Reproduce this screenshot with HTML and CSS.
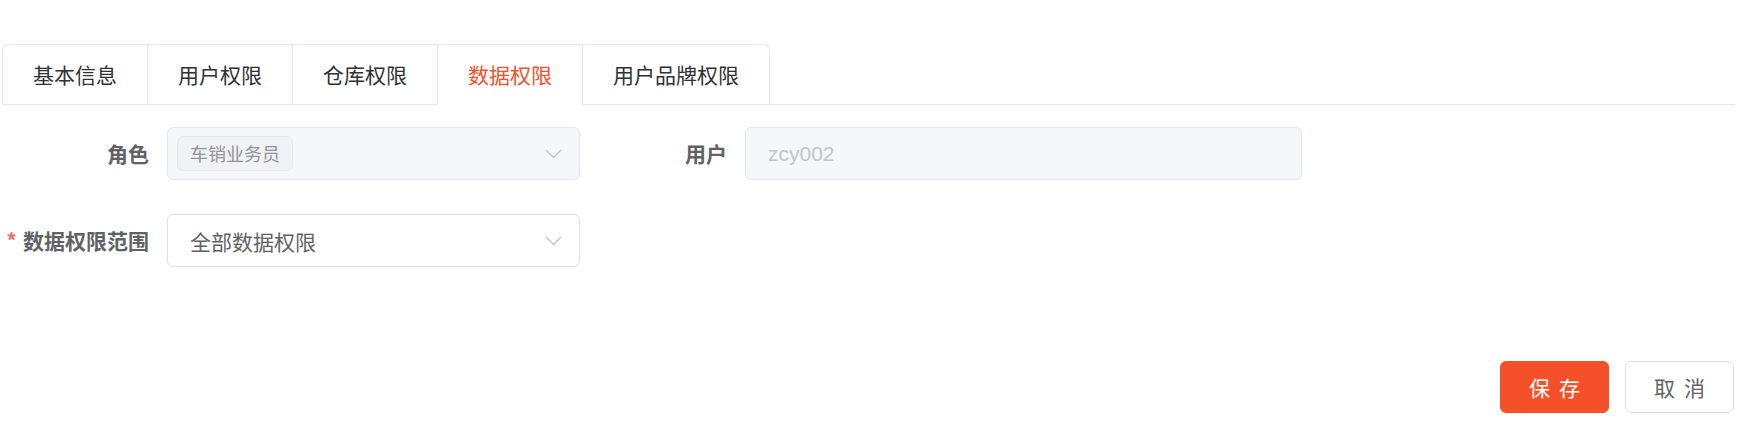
FILE: index.html
```html
<!DOCTYPE html>
<html lang="zh-CN">
<head>
<meta charset="utf-8">
<title>数据权限</title>
<link rel="stylesheet" href="styles.css">
</head>
<body>
<div class="page">
  <div class="tabs-header">
    <div class="tabs-nav">
      <div class="tab">基本信息</div>
      <div class="tab">用户权限</div>
      <div class="tab">仓库权限</div>
      <div class="tab active">数据权限</div>
      <div class="tab">用户品牌权限</div>
    </div>
  </div>

  <div class="form">
    <div class="form-row">
      <div class="form-item col-a">
        <label class="label">角色</label>
        <div class="control select disabled">
          <span class="tag">车销业务员</span>
          <svg class="arrow" width="17" height="10" viewBox="0 0 17 10"><polyline points="1,1 8.5,8.5 16,1" fill="none" stroke="#c0c4cc" stroke-width="1.4"/></svg>
        </div>
      </div>
      <div class="form-item col-b">
        <label class="label">用户</label>
        <div class="control input disabled">
          <span class="latin muted">zcy002</span>
        </div>
      </div>
    </div>
    <div class="form-row second">
      <div class="form-item col-a">
        <label class="label"><span class="req">*</span>数据权限范围</label>
        <div class="control select">
          <span class="value">全部数据权限</span>
          <svg class="arrow" width="17" height="10" viewBox="0 0 17 10"><polyline points="1,1 8.5,8.5 16,1" fill="none" stroke="#c0c4cc" stroke-width="1.4"/></svg>
        </div>
      </div>
    </div>
  </div>

  <div class="actions">
    <button class="btn primary">保存</button>
    <button class="btn">取消</button>
  </div>
</div>
</body>
</html>
```

FILE: styles.css
```css
html, body {
  margin: 0;
  padding: 0;
  background: #fff;
}
body {
  font-family: "Liberation Sans", "Noto Sans CJK SC", sans-serif;
  color: #606266;
}
.page {
  width: 1733px;
  margin-left: 2px;
  padding-top: 44px;
}
.tabs-header {
  display: flex;
  border-bottom: 1px solid #e4e7ed;
}
.tabs-nav {
  display: flex;
  border: 1px solid #e4e7ed;
  border-bottom: none;
  border-radius: 6px 6px 0 0;
  margin-bottom: -1px;
}
.tab {
  box-sizing: border-box;
  height: 60px;
  line-height: 59px;
  padding: 0 30px;
  font-family: "Noto Sans CJK SC", sans-serif;
  font-size: 21px;
  color: #303133;
  border-left: 1px solid #e4e7ed;
  border-bottom: 1px solid transparent;
}
.tab:first-child {
  border-left: none;
}
.tab.active {
  color: #f5502a;
  border-bottom-color: #fff;
}
.form {
  margin-top: 22px;
}
.form-row {
  display: flex;
}
.form-row.second {
  margin-top: 34px;
}
.form-item {
  display: flex;
  align-items: center;
  height: 53px;
}
.col-a {
  width: 578px;
}
.col-b {
  width: 722px;
}
.label {
  box-sizing: border-box;
  width: 165px;
  padding-right: 18px;
  text-align: right;
  font-family: "Noto Sans CJK SC", sans-serif;
  font-weight: 700;
  font-size: 21px;
  color: #606266;
  line-height: 53px;
}
.req {
  color: #f56c6c;
  margin-right: 6px;
  font-weight: 700;
}
.control {
  box-sizing: border-box;
  flex: 1;
  height: 53px;
  border: 1px solid #dcdfe6;
  border-radius: 6px;
  display: flex;
  align-items: center;
  padding-left: 22px;
  padding-right: 17px;
  background: #fff;
}
.control.disabled {
  background: #f5f7fa;
  border-color: #e4e7ed;
}
.select.disabled {
  padding-left: 9px;
}
.value {
  font-family: "Noto Sans CJK SC", sans-serif;
  font-size: 21px;
  color: #606266;
  flex: 1;
}
.tag {
  box-sizing: border-box;
  height: 35px;
  line-height: 33px;
  padding: 0 12px;
  background: #f0f2f5;
  border: 1px solid #e9e9eb;
  border-radius: 6px;
  font-family: "Noto Sans CJK SC", sans-serif;
  font-size: 18px;
  color: #909399;
  margin-right: auto;
}
.arrow {
  flex: none;
  display: block;
}
.latin {
  font-family: "Liberation Sans", sans-serif;
  font-size: 21px;
}
.muted {
  color: #c0c4cc;
}
.actions {
  display: flex;
  justify-content: flex-end;
  gap: 16px;
  margin-top: 94px;
  padding-right: 1px;
}
.btn {
  box-sizing: border-box;
  width: 109px;
  height: 52px;
  border: 1px solid #dcdfe6;
  border-radius: 6px;
  background: #fff;
  color: #606266;
  font-family: "Noto Sans CJK SC", sans-serif;
  font-size: 21px;
  letter-spacing: 9px;
  text-indent: 9px;
  padding: 0;
  cursor: pointer;
}
.btn.primary {
  background: #f5502a;
  border-color: #f5502a;
  color: #fff;
}
```
